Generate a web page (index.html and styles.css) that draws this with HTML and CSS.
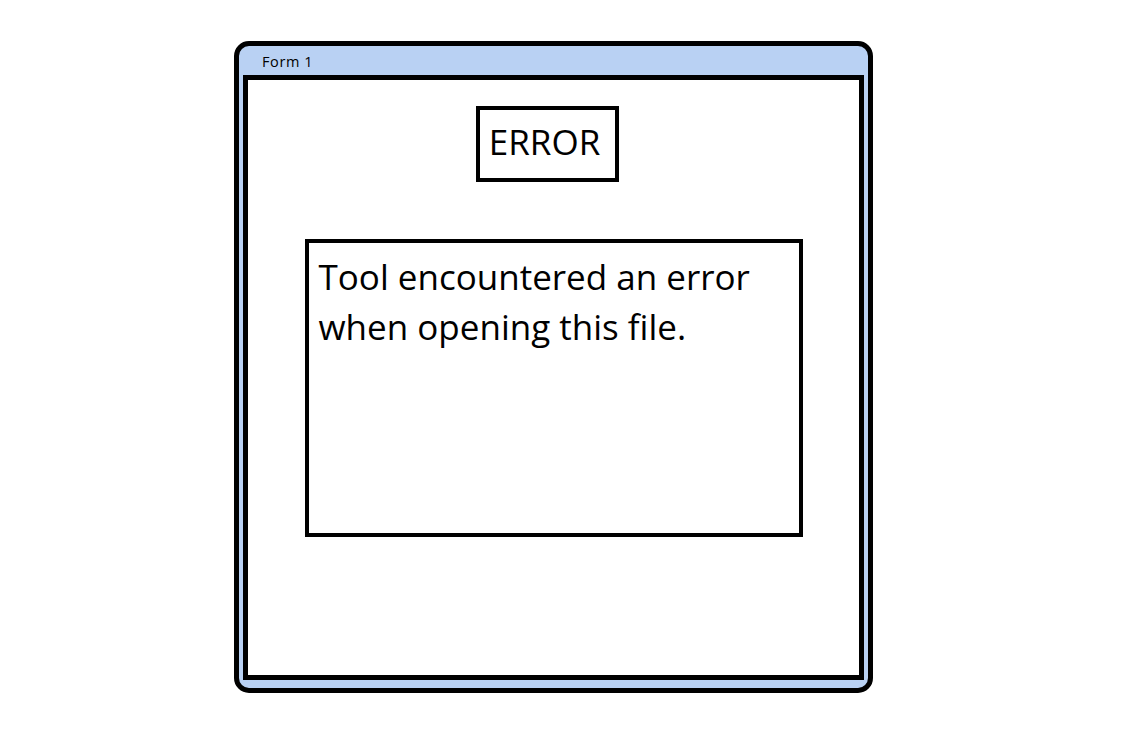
FILE: index.html
```html
<!DOCTYPE html>
<html>
<head>
<meta charset="utf-8">
<link rel="stylesheet" href="styles.css">
</head>
<body>
<div class="window">
  <div class="titlebar">Form 1</div>
  <div class="client">
    <div class="error-label">ERROR</div>
    <div class="message">Tool encountered an error when opening this file.</div>
  </div>
</div>
</body>
</html>
```
FILE: styles.css
```css
html, body {
  margin: 0;
  background: #ffffff;
}
body {
  padding: 41px 0 0 234px;
  font-family: "Open Sans", "Noto Sans", sans-serif;
  color: #000;
}
.window {
  box-sizing: border-box;
  width: 639px;
  height: 652px;
  border: 5px solid #000;
  border-radius: 15px;
  background: #b9d1f3;
  display: flex;
  flex-direction: column;
}
.titlebar {
  height: 29px;
  padding-left: 23px;
  font-size: 14.5px;
  letter-spacing: 0.6px;
  line-height: 31px;
  box-sizing: border-box;
}
.client {
  flex: 1;
  margin: 0 4px 8px 4px;
  border: 5px solid #000;
  background: #fff;
  display: flex;
  flex-direction: column;
  align-items: center;
}
.error-label {
  box-sizing: border-box;
  width: 143px;
  height: 76px;
  margin-top: 26px;
  margin-right: 12px;
  border: 4px solid #000;
  padding-bottom: 6px;
  padding-right: 6px;
  font-size: 35px;
  display: flex;
  align-items: center;
  justify-content: center;
}
.message {
  box-sizing: border-box;
  width: 498px;
  height: 298px;
  margin-top: 57px;
  border: 4px solid #000;
  padding: 9px 10px 0 10px;
  font-size: 35px;
  line-height: 50px;
}
```
